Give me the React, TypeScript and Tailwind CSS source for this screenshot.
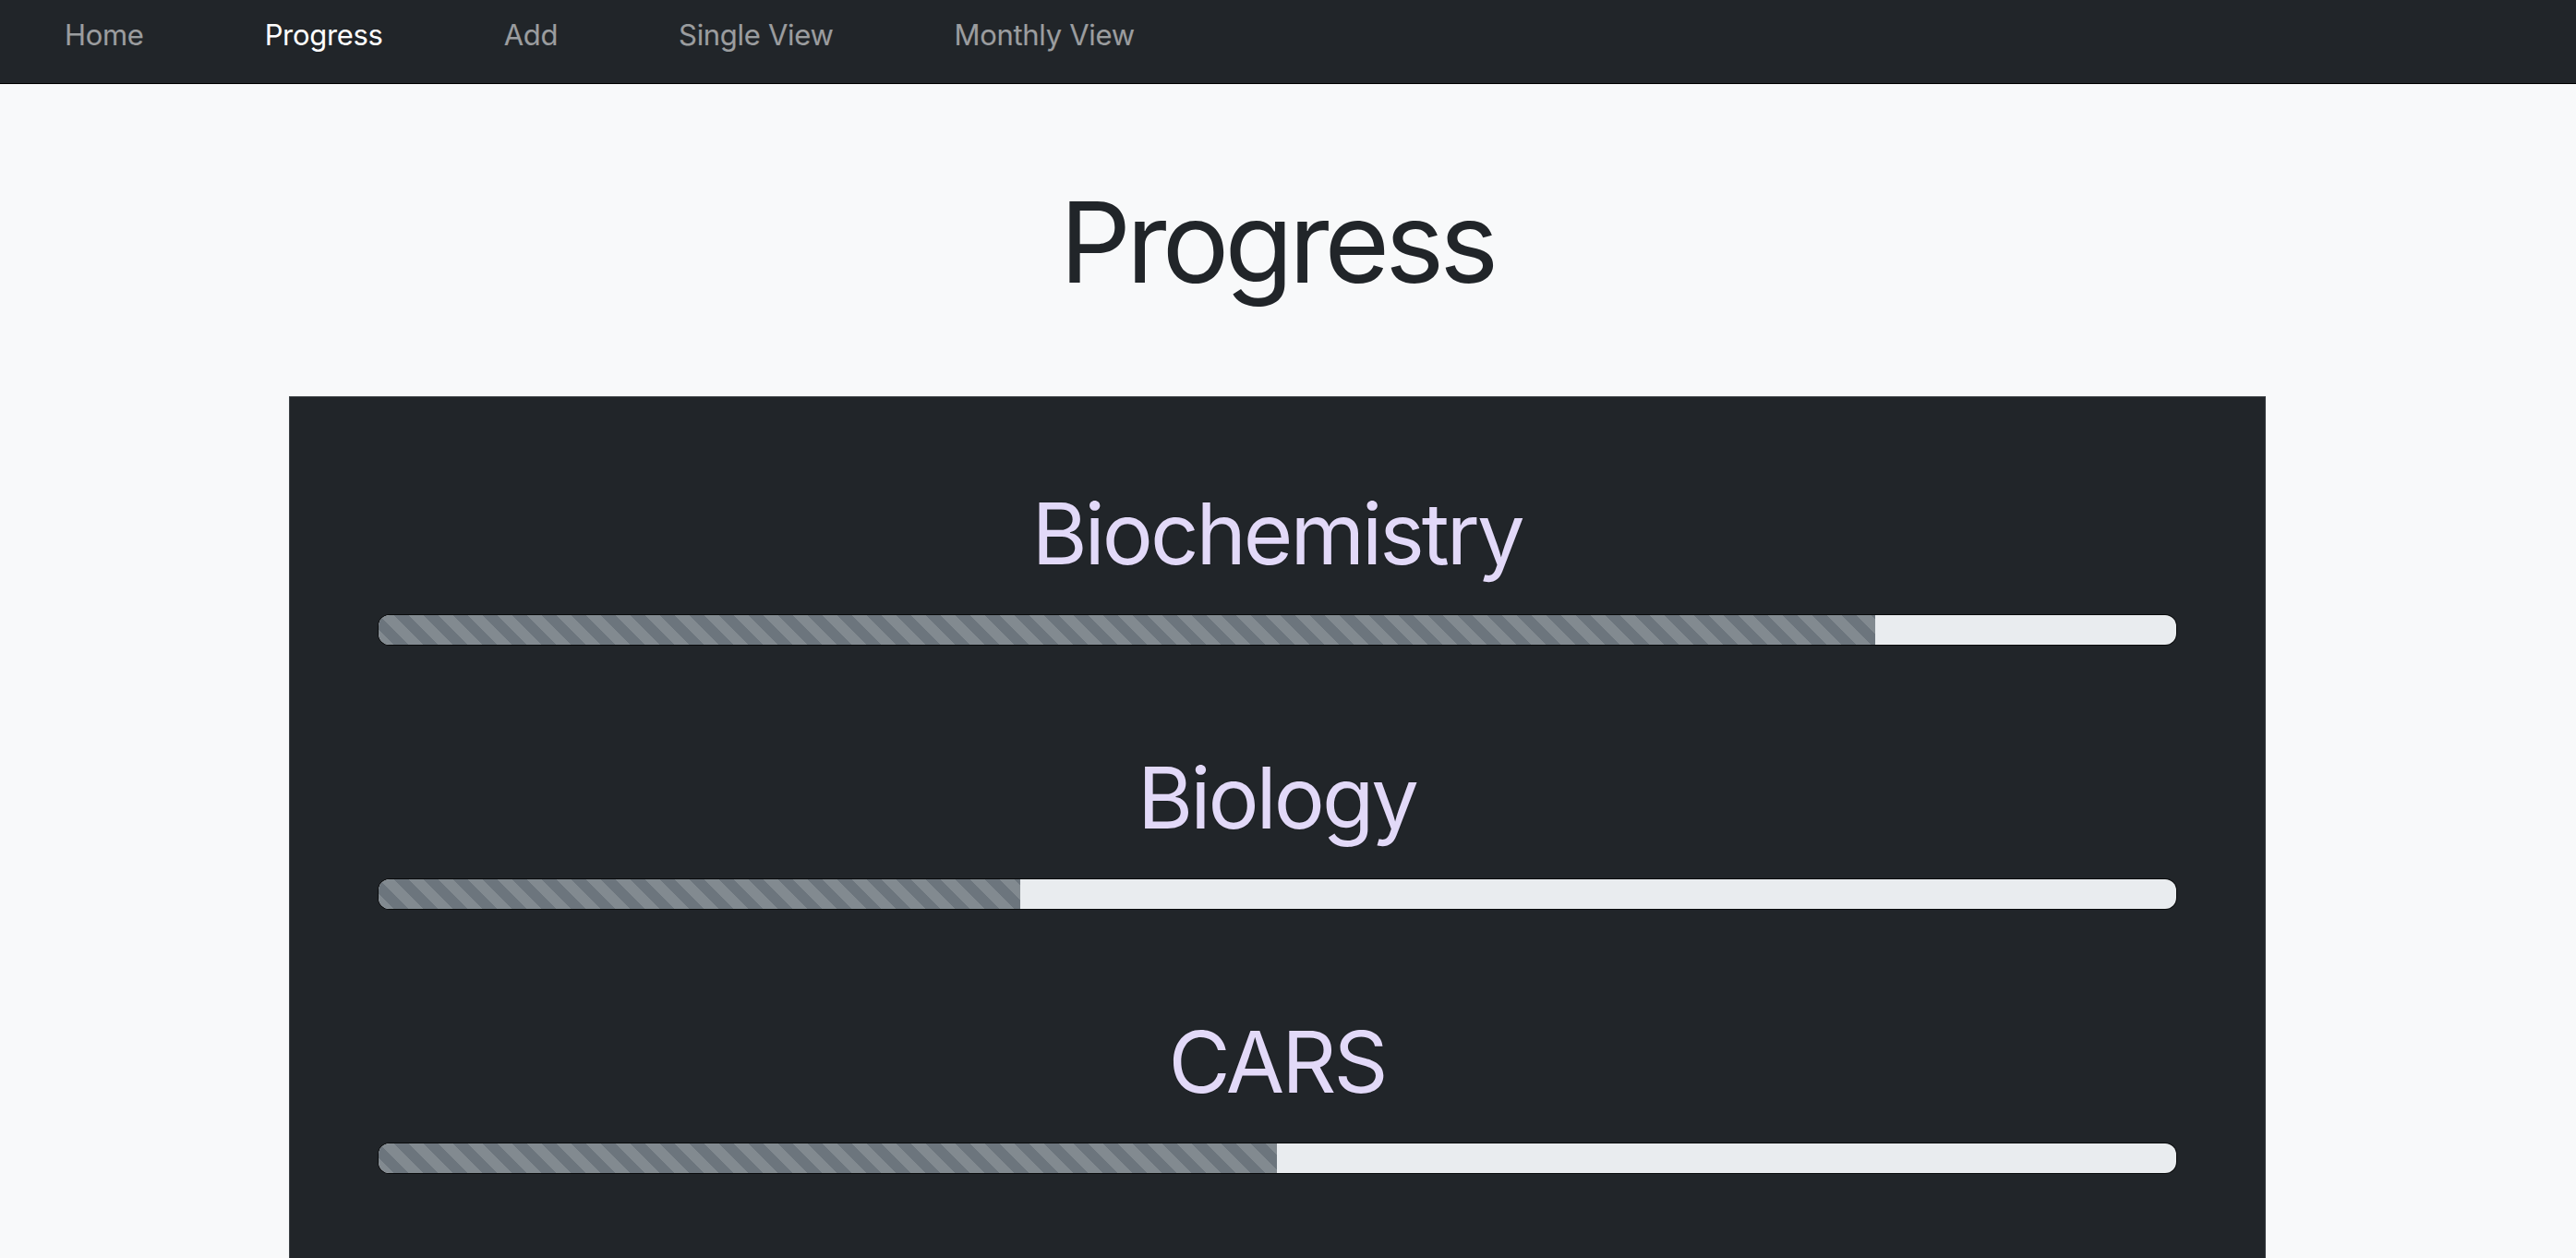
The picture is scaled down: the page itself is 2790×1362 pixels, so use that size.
import React from 'react';

type Subject = {
  name: string;
  percent: number;
};

const subjects: Subject[] = [
  { name: 'Biochemistry', percent: 83.3 },
  { name: 'Biology', percent: 35.7 },
  { name: 'CARS', percent: 50 },
];

const navItems = ['Home', 'Progress', 'Add', 'Single View', 'Monthly View'];

const ProgressRow: React.FC<{ subject: Subject }> = ({ subject }) => (
  <div className="flex flex-col">
    <h2 className="text-center text-[92px] leading-none font-normal tracking-[-0.033em] text-[#e2d9f8] [text-shadow:0_0_1px_rgba(0,0,0,0.8)]">
      {subject.name}
    </h2>
    <div className="mt-[42px] h-[32px] w-full rounded-[12px] bg-[#e9ecef] overflow-hidden flex ring-1 ring-black/70">
      <div
        className="h-full bg-[#6c757d] bg-[linear-gradient(45deg,rgba(255,255,255,.15)_25%,transparent_25%,transparent_50%,rgba(255,255,255,.15)_50%,rgba(255,255,255,.15)_75%,transparent_75%,transparent)] bg-[length:32px_32px]"
        style={{ width: `${subject.percent}%` }}
      />
    </div>
  </div>
);

export default function App() {
  return (
    <div className="min-h-screen bg-[#f8f9fa] font-['Inter','Liberation_Sans',sans-serif]">
      {/* Barra de navegación */}
      <nav className="h-[91px] bg-[#212529] border-b border-black flex items-start pt-[22px] pl-[70px] gap-[131px]">
        {navItems.map((item) => (
          <a
            key={item}
            className={`text-[31px] leading-none tracking-[-0.01em] ${item === 'Progress' ? 'text-white' : 'text-white/55'}`}
          >
            {item}
          </a>
        ))}
      </nav>

      <main className="pr-[24px]">
        <h1 className="mt-[111px] text-center text-[121px] leading-none font-normal tracking-[-0.04em] text-[#212529]">
          Progress
        </h1>

        {/* Tarjeta de progreso */}
        <div className="mx-auto mt-[106px] w-[2141px] bg-[#212529] border border-[#3d4246] px-[96px] pt-[102px] pb-[121px] flex flex-col gap-[120px]">
          {subjects.map((s) => (
            <ProgressRow key={s.name} subject={s} />
          ))}
        </div>
      </main>
    </div>
  );
}
